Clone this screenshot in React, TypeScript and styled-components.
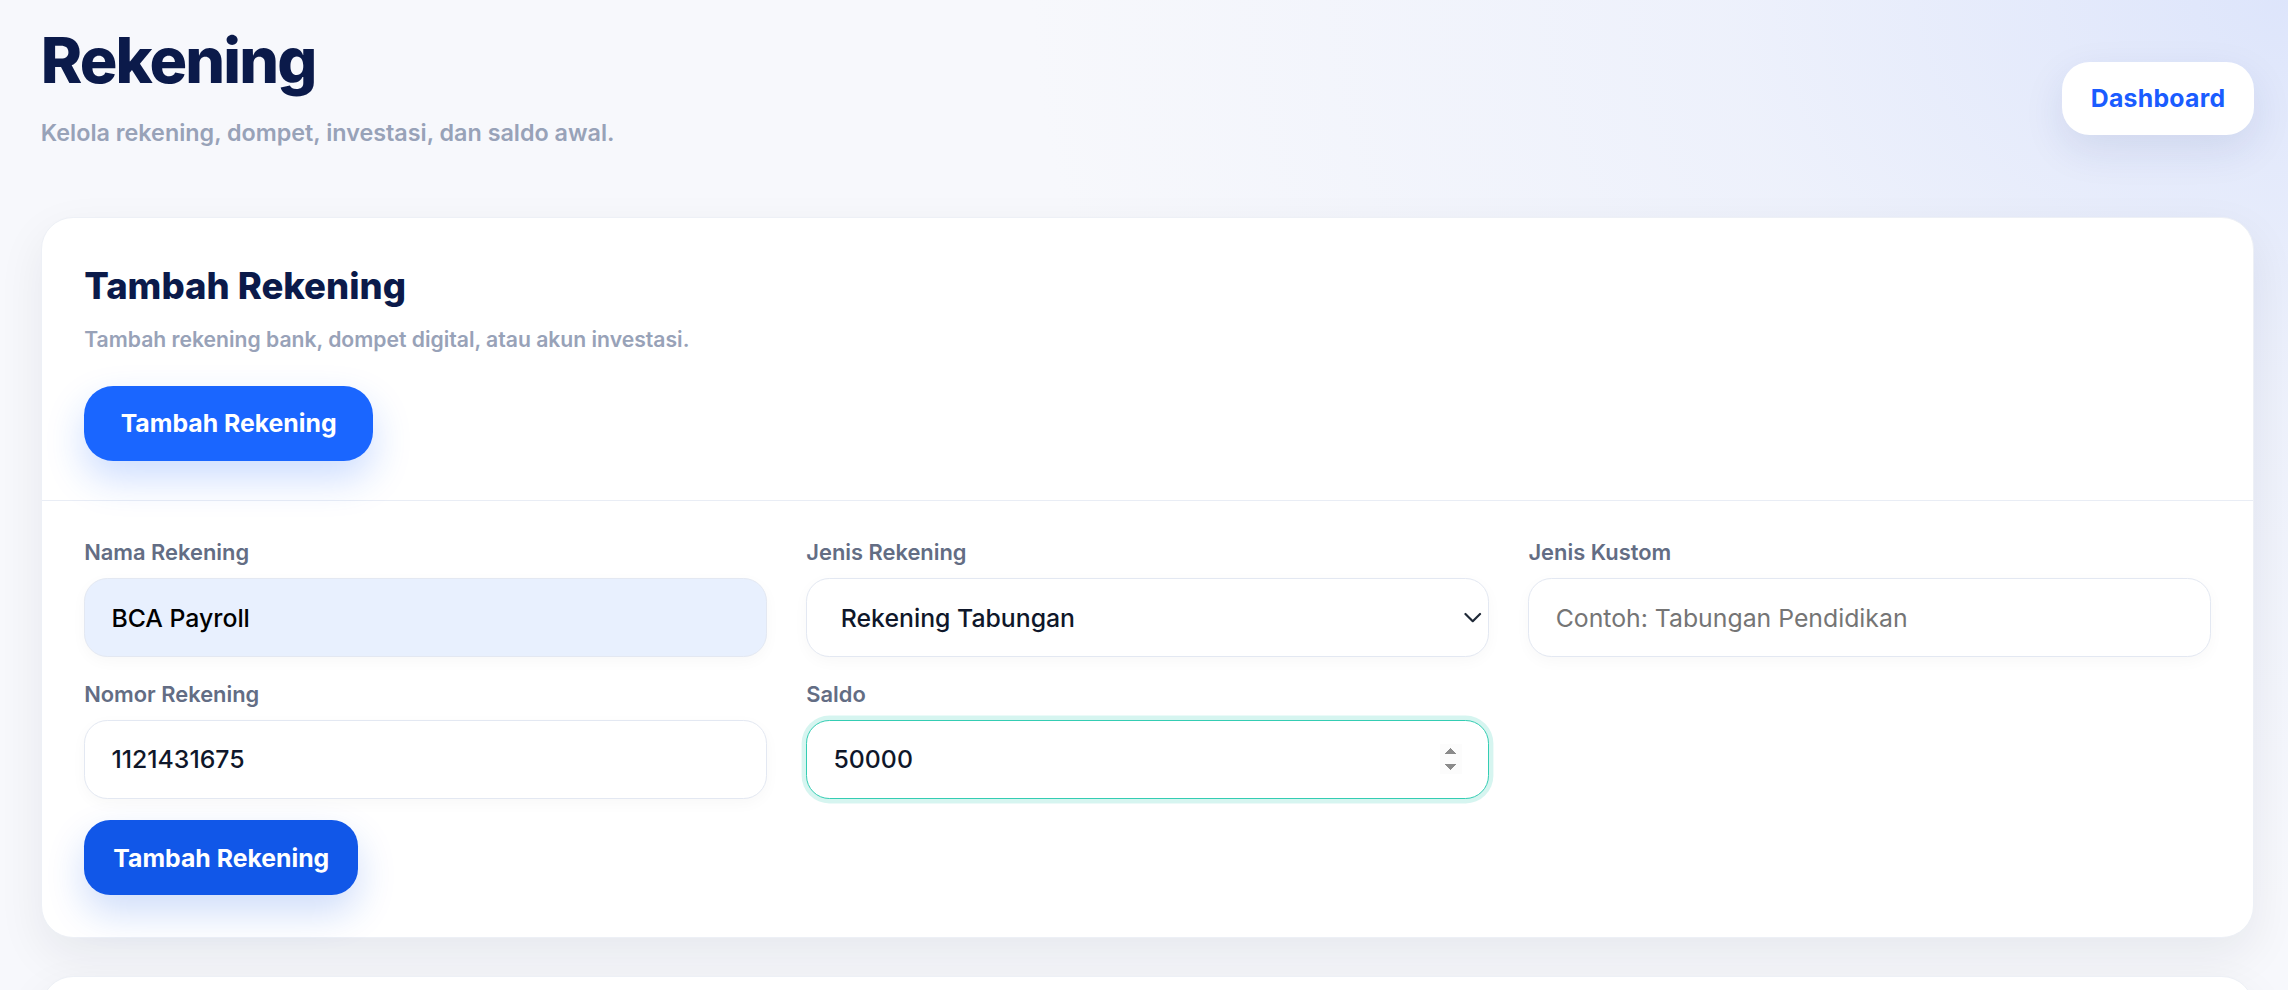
import React from "react";
import styled, { createGlobalStyle, css } from "styled-components";

const GlobalStyle = createGlobalStyle`
  html, body {
    margin: 0;
    padding: 0;
  }
  body {
    min-height: 100vh;
    background:
      radial-gradient(ellipse 55% 60% at 100% 0%, rgba(220, 228, 251, 0.95) 0%, rgba(228, 234, 251, 0.5) 45%, rgba(247, 248, 252, 0) 100%),
      #f7f8fc;
    font-family: Inter, "Noto Sans", sans-serif;
  }
  * { box-sizing: border-box; }
`;

const Page = styled.div`
  zoom: 1.4592;
  padding: 17px 23px 40px 28px;
  font-family: Inter, "Noto Sans", sans-serif;
  display: flex;
  flex-direction: column;
`;

const Header = styled.header`
  display: flex;
  justify-content: space-between;
  align-items: flex-start;
  margin-bottom: 46px;
`;

const TitleBlock = styled.div`
  display: flex;
  flex-direction: column;
`;

const Title = styled.h1`
  margin: 0;
  font-size: 43px;
  line-height: 48px;
  font-weight: 800;
  letter-spacing: -0.03em;
  color: #0b1a4a;
`;

const Subtitle = styled.p`
  margin: 14px 0 0;
  font-size: 16px;
  line-height: 24px;
  font-weight: 600;
  color: #98a2b8;
`;

const DashButton = styled.button`
  margin-top: 25.5px;
  height: 50px;
  padding: 0 20px;
  border: none;
  border-radius: 19px;
  background: #ffffff;
  color: #1a5cff;
  font-family: Inter, "Noto Sans", sans-serif;
  font-size: 17px;
  font-weight: 700;
  letter-spacing: 0.01em;
  box-shadow: 0 10px 28px rgba(30, 50, 120, 0.1);
  cursor: pointer;
`;

const Stack = styled.div`
  display: flex;
  flex-direction: column;
  gap: 26px;
`;

const Card = styled.section`
  background: #ffffff;
  border: 1px solid #edf0f6;
  border-radius: 22px;
  box-shadow: 0 12px 32px rgba(15, 23, 42, 0.07);
`;

const CardHeader = styled.div`
  padding: 32px 29px 27px;
  display: flex;
  flex-direction: column;
  align-items: flex-start;
`;

const CardTitle = styled.h2`
  margin: 0;
  font-size: 25px;
  line-height: 30px;
  font-weight: 800;
  color: #0b1a4a;
`;

const CardSub = styled.p`
  margin: 11px 0 21px;
  font-size: 14.5px;
  line-height: 21px;
  font-weight: 600;
  color: #98a2b8;
`;

const PrimaryButton = styled.button<{ $tone: "bright" | "deep" }>`
  height: 51px;
  border: none;
  color: #ffffff;
  font-family: Inter, "Noto Sans", sans-serif;
  font-size: 17px;
  font-weight: 700;
  letter-spacing: 0;
  cursor: pointer;
  ${(p) =>
    p.$tone === "bright"
      ? css`
          padding: 0 25px;
          border-radius: 20px;
          background: #1a66ff;
          box-shadow: 0 12px 26px rgba(26, 102, 255, 0.22);
        `
      : css`
          padding: 0 20px;
          border-radius: 18px;
          background: #1157e8;
          box-shadow: 0 12px 26px rgba(17, 87, 232, 0.2);
        `}
`;

const FormSection = styled.div`
  border-top: 1px solid #e9edf5;
  padding: 25px 29px 29px;
`;

const Grid = styled.div`
  display: grid;
  grid-template-columns: repeat(3, 1fr);
  column-gap: 27px;
  row-gap: 15px;
`;

const Field = styled.div`
  display: flex;
  flex-direction: column;
  gap: 7px;
`;

const Label = styled.label`
  font-size: 15px;
  line-height: 21px;
  font-weight: 600;
  color: #636d84;
`;

const fieldBase = css`
  width: 100%;
  height: 54px;
  border: 1px solid #e3e8f2;
  border-radius: 16px;
  padding: 0 18px;
  font-family: Inter, "Noto Sans", sans-serif;
  font-size: 17px;
  font-weight: 500;
  color: #0f172a;
  background: #ffffff;
  outline: none;
  box-shadow: 0 3px 10px rgba(15, 23, 42, 0.03);
`;

const TextInput = styled.input<{ $filled?: boolean; $focused?: boolean }>`
  ${fieldBase}
  ${(p) =>
    p.$filled &&
    css`
      background: #e8f0fe;
      color: #000000;
    `}
  ${(p) =>
    p.$focused &&
    css`
      border-color: #34cdb3;
      box-shadow: 0 0 0 3px rgba(52, 205, 179, 0.2);
    `}
  &::placeholder {
    color: #757575;
    font-weight: 400;
  }
  &::-webkit-inner-spin-button {
    opacity: 1;
  }
`;

const SelectWrap = styled.div`
  position: relative;
`;

const Select = styled.select`
  ${fieldBase}
  appearance: none;
  -webkit-appearance: none;
  padding-left: 23px;
  color: #0f172a;
`;

const Chevron = styled.svg`
  position: absolute;
  right: 5px;
  top: 50%;
  transform: translateY(-50%);
  pointer-events: none;
`;

const Actions = styled.div`
  margin-top: 15px;
`;

const ListCard = styled(Card)`
  min-height: 320px;
`;

export default function App() {
  return (
    <>
      <GlobalStyle />
      <Page>
        <Header>
          <TitleBlock>
            <Title>Rekening</Title>
            <Subtitle>Kelola rekening, dompet, investasi, dan saldo awal.</Subtitle>
          </TitleBlock>
          <DashButton type="button">Dashboard</DashButton>
        </Header>

        <Stack>
          <Card>
            <CardHeader>
              <CardTitle>Tambah Rekening</CardTitle>
              <CardSub>Tambah rekening bank, dompet digital, atau akun investasi.</CardSub>
              <PrimaryButton $tone="bright" type="button">
                Tambah Rekening
              </PrimaryButton>
            </CardHeader>
            <FormSection>
              <Grid>
                <Field>
                  <Label>Nama Rekening</Label>
                  <TextInput $filled defaultValue="BCA Payroll" />
                </Field>
                <Field>
                  <Label>Jenis Rekening</Label>
                  <SelectWrap>
                    <Select defaultValue="tabungan">
                      <option value="tabungan">Rekening Tabungan</option>
                      <option value="giro">Rekening Giro</option>
                      <option value="ewallet">Dompet Digital</option>
                      <option value="investasi">Akun Investasi</option>
                    </Select>
                    <Chevron width="12" height="8" viewBox="0 0 12 8" fill="none">
                      <path d="M1 1.2 L6 6.2 L11 1.2" stroke="#1f2937" strokeWidth="1.5" strokeLinecap="round" strokeLinejoin="round" />
                    </Chevron>
                  </SelectWrap>
                </Field>
                <Field>
                  <Label>Jenis Kustom</Label>
                  <TextInput placeholder="Contoh: Tabungan Pendidikan" />
                </Field>
                <Field>
                  <Label>Nomor Rekening</Label>
                  <TextInput defaultValue="1121431675" />
                </Field>
                <Field>
                  <Label>Saldo</Label>
                  <TextInput $focused type="number" defaultValue="50000" />
                </Field>
              </Grid>
              <Actions>
                <PrimaryButton $tone="deep" type="button">
                  Tambah Rekening
                </PrimaryButton>
              </Actions>
            </FormSection>
          </Card>

          <ListCard />
        </Stack>
      </Page>
    </>
  );
}
